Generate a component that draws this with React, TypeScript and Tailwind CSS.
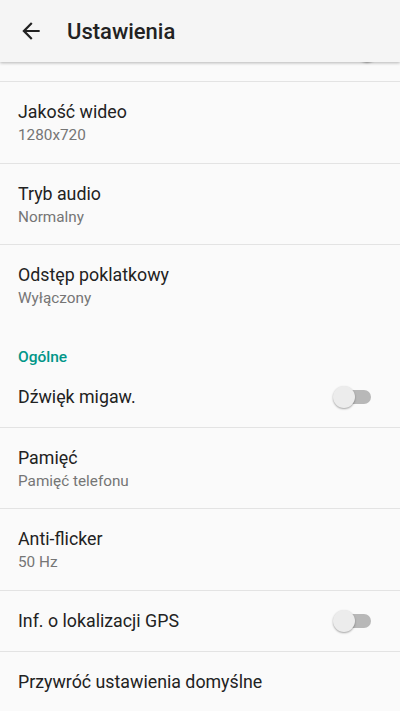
import React from "react";

// Przełącznik w stylu Material (wyłączony)
const Toggle = ({ on = false }: { on?: boolean }) => (
  <div className="relative w-[38px] h-[22px] shrink-0">
    <div className="absolute left-[3px] right-0 top-[4px] h-[14px] rounded-full bg-[#b8b8b8]" />
    <div
      className={
        "absolute top-0 w-[22px] h-[22px] rounded-full bg-[#ececec] shadow-[0_1px_2px_rgba(0,0,0,0.35)] " +
        (on ? "left-[16px]" : "left-0")
      }
    />
  </div>
);

const TwoLineRow = ({
  title,
  sub,
  last = false,
  tall = false,
}: {
  title: string;
  sub: string;
  last?: boolean;
  tall?: boolean;
}) => (
  <div
    className={
      "pl-[18px] pr-[29px] pt-[19px] " +
      (tall ? "pb-[18px] " : "pb-[17px] ") +
      (last ? "" : "border-b border-[#e3e3e3]")
    }
  >
    <div className="text-[17.8px] leading-[22px] text-[#222222]">{title}</div>
    <div className="mt-[2px] text-[15.3px] leading-5 text-[#757575]">{sub}</div>
  </div>
);

const OneLineRow = ({ title, toggle = false, last = false }: { title: string; toggle?: boolean; last?: boolean }) => (
  <div
    className={
      "flex items-center justify-between pl-[18px] pr-[29px] pt-[19px] pb-[19px] " +
      (last ? "" : "border-b border-[#e3e3e3]")
    }
  >
    <div className="text-[17.8px] leading-[22px] text-[#222222]">{title}</div>
    {toggle && <Toggle />}
  </div>
);

const App = () => {
  return (
    <div className="w-[400px] h-[711px] overflow-hidden bg-[#fafafa] font-['Roboto',sans-serif] flex flex-col">
      {/* Pasek narzędzi */}
      <div className="relative z-10 h-[62px] shrink-0 bg-[#f5f5f5] shadow-[0_1px_3px_rgba(0,0,0,0.28)] flex items-center">
        <svg width="26" height="26" viewBox="0 0 24 24" className="ml-[18px] text-[#222222]" fill="currentColor">
          <path d="M20 11H7.83l5.59-5.59L12 4l-8 8 8 8 1.41-1.41L7.83 13H20v-2z" />
        </svg>
        <div className="ml-[23px] pt-[2px] text-[22px] leading-7 font-medium text-[#222222]">Ustawienia</div>
      </div>

      {/* Częściowo przewinięty wiersz */}
      <div className="h-[19px] shrink-0 overflow-hidden border-b border-[#e3e3e3] box-content">
        <div className="mt-[-41px] h-[60px] flex items-center justify-end pr-[22px]">
          <Toggle on />
        </div>
      </div>

      <TwoLineRow title="Jakość wideo" sub="1280x720" tall />
      <TwoLineRow title="Tryb audio" sub="Normalny" />
      <TwoLineRow title="Odstęp poklatkowy" sub="Wyłączony" last />

      <div className="h-[42px] shrink-0 pt-[22px] pl-[18px] text-[15.5px] leading-5 font-medium text-[#009688]">Ogólne</div>

      <OneLineRow title="Dźwięk migaw." toggle />
      <TwoLineRow title="Pamięć" sub="Pamięć telefonu" />
      <TwoLineRow title="Anti-flicker" sub="50 Hz" tall />
      <OneLineRow title="Inf. o lokalizacji GPS" toggle />
      <OneLineRow title="Przywróć ustawienia domyślne" last />
    </div>
  );
};

export default App;
